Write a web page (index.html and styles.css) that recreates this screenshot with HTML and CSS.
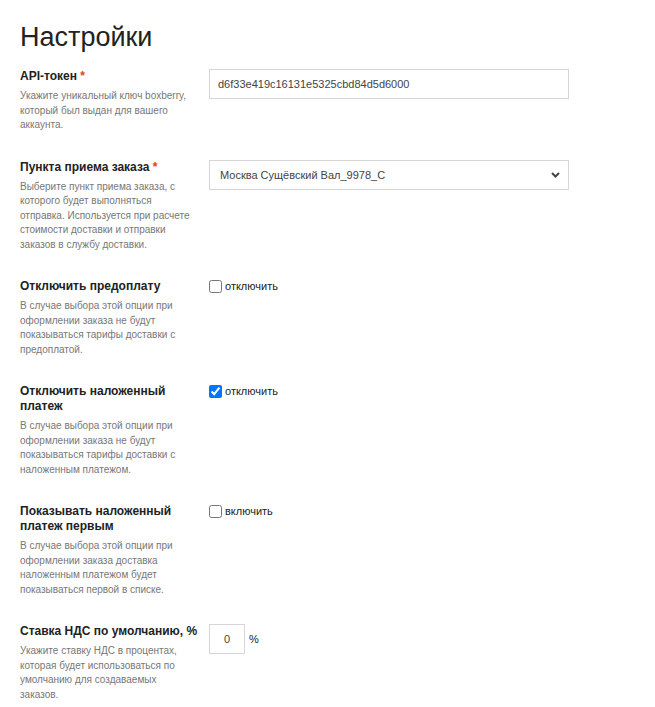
FILE: index.html
```html
<!DOCTYPE html>
<html lang="ru">
<head>
<meta charset="utf-8">
<title>Настройки</title>
<link rel="stylesheet" href="styles.css">
</head>
<body>
<div class="page">
  <h1 class="title">Настройки</h1>

  <div class="row">
    <div class="info">
      <div class="label">API-токен <span class="req">*</span></div>
      <div class="desc">Укажите уникальный ключ boxberry, который был выдан для вашего аккаунта.</div>
    </div>
    <div class="field">
      <input class="text-input" type="text" value="d6f33e419c16131e5325cbd84d5d6000">
    </div>
  </div>

  <div class="row">
    <div class="info">
      <div class="label">Пункта приема заказа <span class="req">*</span></div>
      <div class="desc">Выберите пункт приема заказа, с которого будет выполняться отправка. Используется при расчете стоимости доставки и отправки заказов в службу доставки.</div>
    </div>
    <div class="field">
      <div class="select">
        <span class="select-value">Москва Сущёвский Вал_9978_С</span>
        <svg class="chevron" width="9" height="6" viewBox="0 0 9 6"><path d="M1 1 L4.5 4.5 L8 1" fill="none" stroke="#444" stroke-width="2"/></svg>
      </div>
    </div>
  </div>

  <div class="row">
    <div class="info">
      <div class="label">Отключить предоплату</div>
      <div class="desc">В случае выбора этой опции при оформлении заказа не будут показываться тарифы доставки с предоплатой.</div>
    </div>
    <div class="field">
      <label class="check"><input type="checkbox"> отключить</label>
    </div>
  </div>

  <div class="row">
    <div class="info">
      <div class="label">Отключить наложенный платеж</div>
      <div class="desc">В случае выбора этой опции при оформлении заказа не будут показываться тарифы доставки с наложенным платежом.</div>
    </div>
    <div class="field">
      <label class="check"><input type="checkbox" checked> отключить</label>
    </div>
  </div>

  <div class="row">
    <div class="info">
      <div class="label">Показывать наложенный платеж первым</div>
      <div class="desc">В случае выбора этой опции при оформлении заказа доставка наложенным платежом будет показываться первой в списке.</div>
    </div>
    <div class="field">
      <label class="check"><input type="checkbox"> включить</label>
    </div>
  </div>

  <div class="row">
    <div class="info">
      <div class="label">Ставка НДС по умолчанию, %</div>
      <div class="desc">Укажите ставку НДС в процентах, которая будет использоваться по умолчанию для создаваемых заказов.</div>
    </div>
    <div class="field field-inline">
      <input class="num-input" type="text" value="0">
      <span class="unit">%</span>
    </div>
  </div>
</div>
</body>
</html>
```

FILE: styles.css
```css
* { box-sizing: border-box; }

body {
  margin: 0;
  background: #fff;
  font-family: "Liberation Sans", Arial, sans-serif;
  color: #222;
}

.page {
  padding: 0 20px;
}

.title {
  margin: 21px 0 0;
  font-size: 27px;
  font-weight: 400;
  line-height: 32px;
  color: #222;
}

.row {
  display: grid;
  grid-template-columns: 189px 360px;
  margin-top: 16px;
}

.row + .row {
  margin-top: 27px;
}

.label {
  max-width: 186px;
  font-size: 12px;
  font-weight: 700;
  line-height: 15px;
  color: #222;
}

.req {
  color: #e2401c;
}

.desc {
  max-width: 172px;
  margin-top: 5px;
  font-size: 10px;
  line-height: 14.5px;
  color: #777;
}

.text-input {
  display: block;
  width: 360px;
  height: 30px;
  margin: 0;
  padding: 0 8px;
  border: 1px solid #d6d6d6;
  border-radius: 0;
  font-family: "Liberation Sans", Arial, sans-serif;
  font-size: 11px;
  color: #444;
  background: #fff;
  outline: none;
}

.select {
  display: flex;
  align-items: center;
  justify-content: space-between;
  width: 360px;
  height: 30px;
  padding: 0 8px 0 10px;
  border: 1px solid #d6d6d6;
  font-size: 11px;
  color: #444;
  background: #fff;
}

.chevron {
  display: block;
}

.check {
  display: flex;
  align-items: center;
  gap: 3px;
  height: 14px;
  font-size: 11px;
  color: #222;
}

.check input {
  width: 13px;
  height: 13px;
  margin: 0;
}

.field-inline {
  display: flex;
  align-items: center;
  gap: 4px;
  height: 30px;
}

.num-input {
  width: 36px;
  height: 30px;
  margin: 0;
  padding: 0;
  border: 1px solid #d6d6d6;
  border-radius: 0;
  text-align: center;
  font-family: "Liberation Sans", Arial, sans-serif;
  font-size: 11px;
  color: #444;
  background: #fff;
  outline: none;
}

.unit {
  font-size: 11px;
  color: #222;
}
```
